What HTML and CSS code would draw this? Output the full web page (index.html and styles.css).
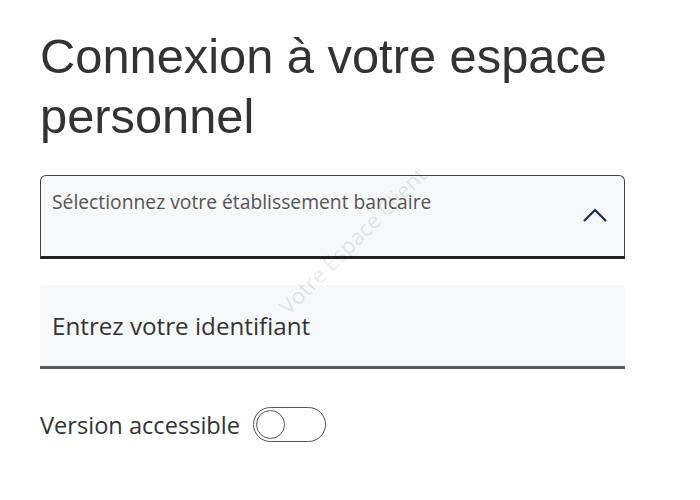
FILE: index.html
```html
<!DOCTYPE html>
<html lang="fr">
<head>
<meta charset="utf-8">
<title>Connexion</title>
<link rel="stylesheet" href="styles.css">
</head>
<body>
<main class="page">
  <h1 class="title">Connexion à votre espace personnel</h1>
  <div class="select">
    <span class="select-label">Sélectionnez votre établissement bancaire</span>
    <svg class="chevron" width="26" height="16" viewBox="0 0 26 16"><path d="M2 14 L13 3 L24 14" fill="none" stroke="#1b2a56" stroke-width="2.2"/></svg>
  </div>
  <div class="input">Entrez votre identifiant</div>
  <div class="toggle-row">
    <span class="toggle-label">Version accessible</span>
    <span class="toggle"><span class="knob"></span></span>
  </div>
  <div class="watermark">Votre Espace Client</div>
</main>
</body>
</html>
```
FILE: styles.css
```css
html, body { margin: 0; padding: 0; background: #fff; }
body { font-family: "Open Sans", "Noto Sans", sans-serif; color: #333; }
.page { position: relative; padding: 26px 0 0 40px; width: 585px; }
.title {
  margin: 0;
  font-family: "Liberation Sans", Arial, sans-serif;
  font-weight: normal;
  font-size: 48.8px;
  line-height: 60px;
  color: #333;
  width: 600px;
}
.select {
  margin-top: 29px;
  height: 84px;
  box-sizing: border-box;
  background: #f7f8fa;
  border: 1px solid #444;
  border-bottom: 3px solid #222;
  border-radius: 6px 6px 0 0;
  display: flex;
  justify-content: space-between;
  padding: 13px 16px 0 11px;
}
.select-label { font-size: 19.3px; color: #555; line-height: 26px; }
.chevron { margin-top: 18px; }
.input {
  margin-top: 26px;
  height: 84px;
  box-sizing: border-box;
  background: #f7f8fa;
  border-bottom: 3px solid #5a5a5a;
  border-radius: 4px 4px 0 0;
  display: flex;
  align-items: center;
  padding: 0 12px 1px;
  font-size: 24.2px;
  color: #333;
}
.toggle-row {
  margin-top: 38px;
  display: flex;
  align-items: center;
  gap: 13px;
}
.toggle-label { font-size: 23.6px; color: #333; }
.toggle {
  width: 73px;
  height: 35px;
  box-sizing: border-box;
  border: 1.5px solid #555;
  border-radius: 18px;
  display: flex;
  align-items: center;
  padding-left: 2px;
}
.knob {
  width: 29px;
  height: 29px;
  box-sizing: border-box;
  border: 1.5px solid #555;
  border-radius: 50%;
}
.watermark {
  position: absolute;
  left: 352px;
  top: 240px;
  font-size: 22px;
  color: rgba(0,0,0,0.1);
  transform: translate(-50%, -50%) rotate(-45deg);
  white-space: nowrap;
  pointer-events: none;
}
```
